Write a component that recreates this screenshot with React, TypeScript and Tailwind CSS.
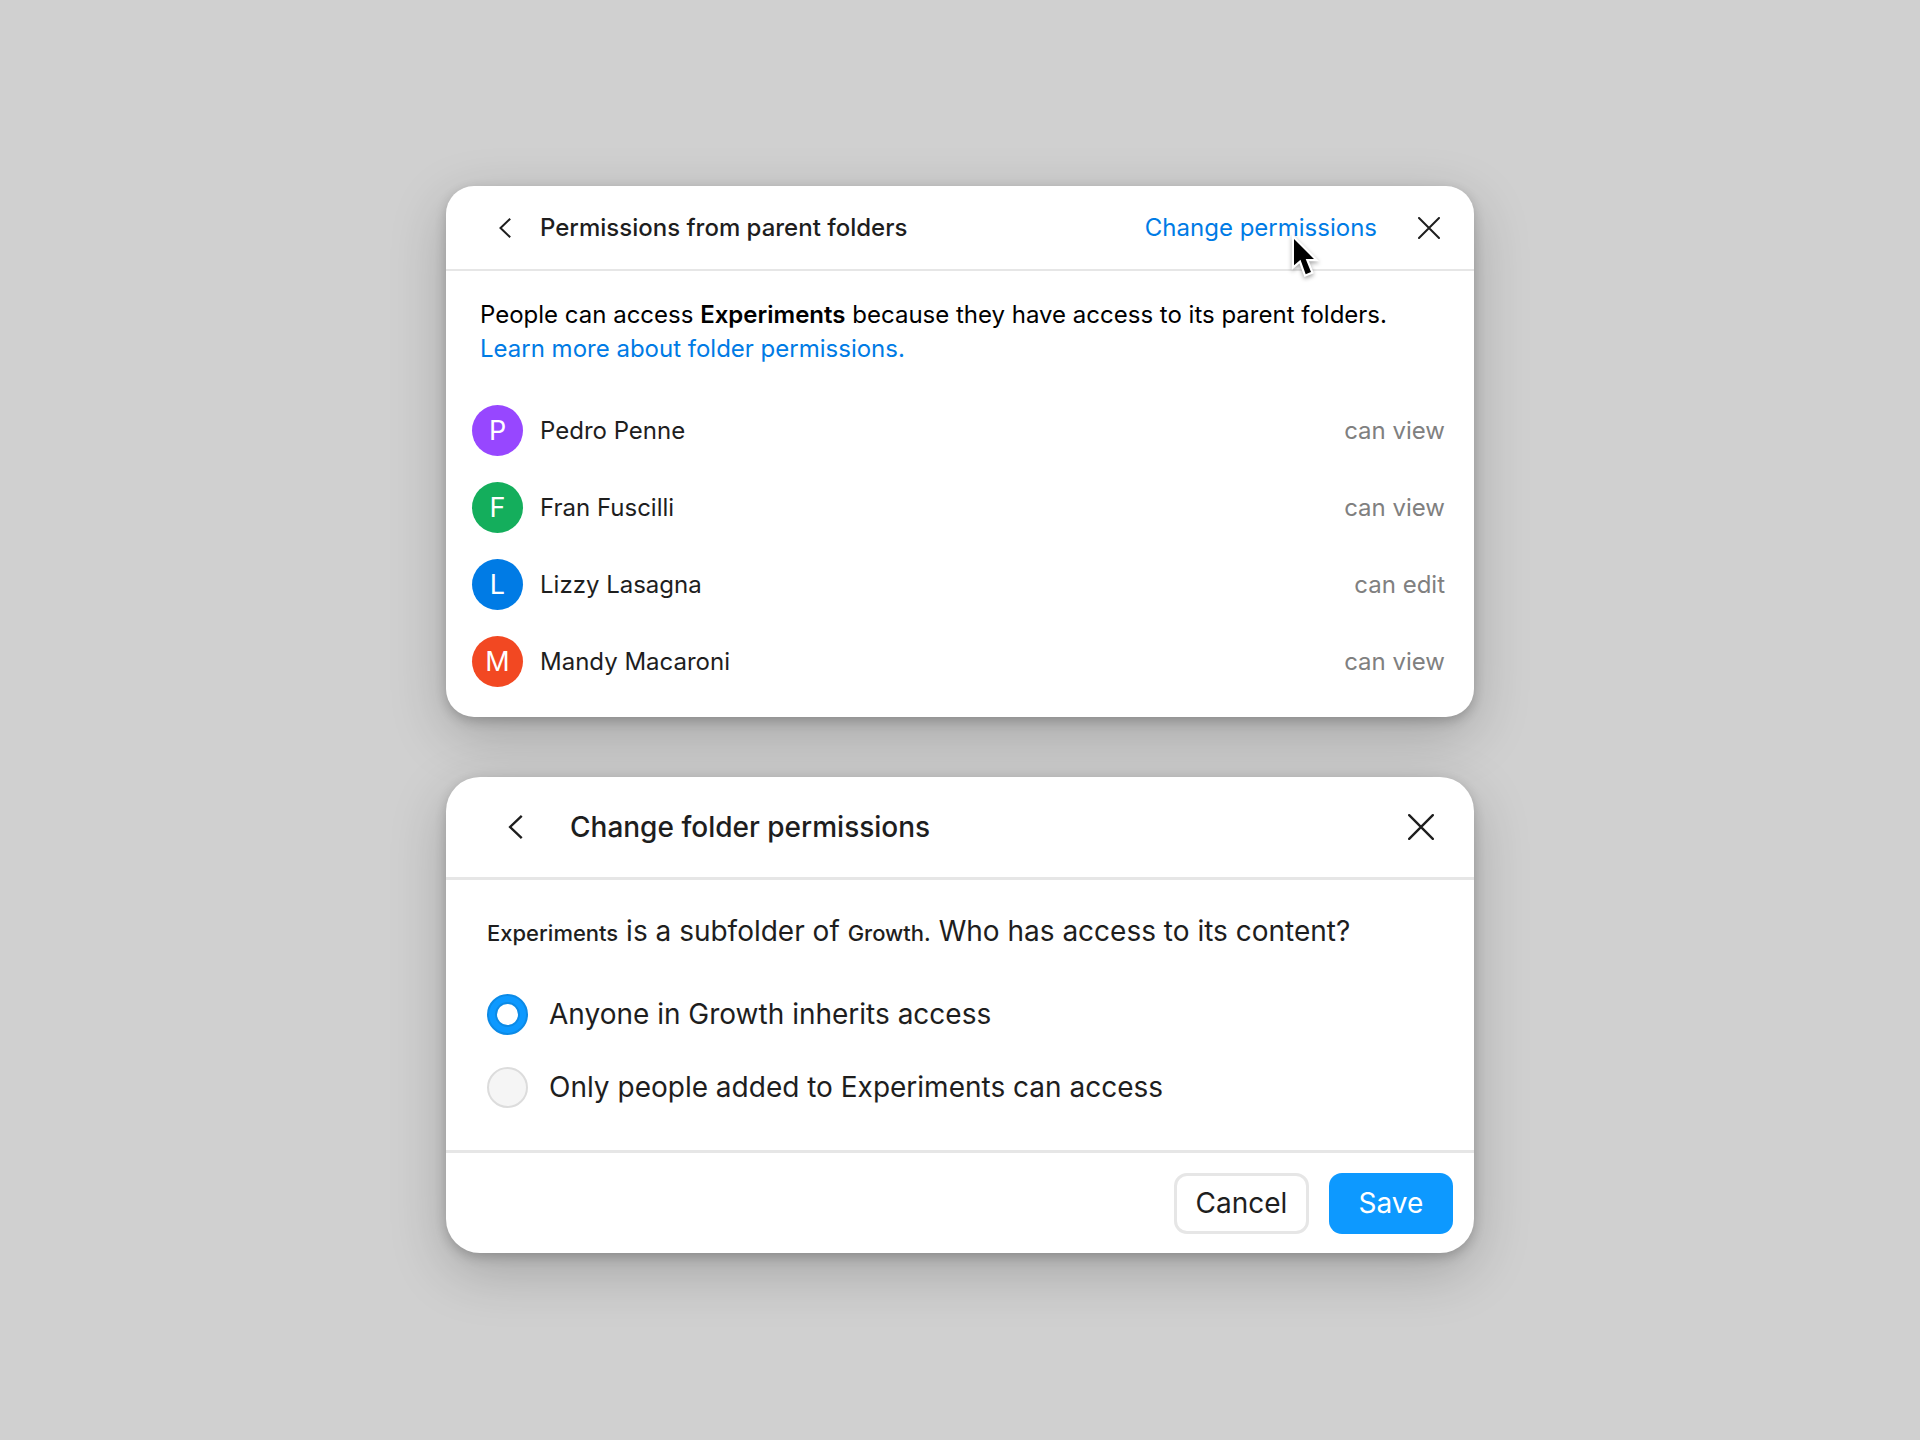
import React, { useState } from 'react';
import clsx from 'clsx';

interface Person {
  name: string;
  role: string;
  color: string;
}

const people: Person[] = [
  { name: 'Pedro Penne', role: 'can view', color: 'bg-[#9747ff]' },
  { name: 'Fran Fuscilli', role: 'can view', color: 'bg-[#14ae5c]' },
  { name: 'Lizzy Lasagna', role: 'can edit', color: 'bg-[#007be5]' },
  { name: 'Mandy Macaroni', role: 'can view', color: 'bg-[#f24822]' },
];

const cardShadow = 'shadow-[0_4px_12px_rgba(0,0,0,0.2),0_18px_56px_rgba(0,0,0,0.21)]';

const BackIcon: React.FC<{ className: string }> = ({ className }) => (
  <svg viewBox="0 0 12 20" className={className} fill="none" stroke="currentColor" strokeWidth="2" aria-hidden="true">
    <path d="M11.2 0.8 1.5 10l9.7 9.2" />
  </svg>
);

const CloseIcon: React.FC<{ className: string }> = ({ className }) => (
  <svg
    viewBox="0 0 22 22"
    className={className}
    fill="none"
    stroke="currentColor"
    strokeWidth="2"
    strokeLinecap="round"
    aria-hidden="true"
  >
    <path d="M1 1l20 20M21 1 1 21" />
  </svg>
);

const Cursor: React.FC = () => (
  <svg
    viewBox="0 0 34 48"
    className="pointer-events-none absolute top-[22px] right-[53px] h-[48px] w-[34px] drop-shadow-[0_2px_2px_rgba(0,0,0,0.35)]"
    aria-hidden="true"
  >
    <path
      d="M4 6v26.3l6.5-5.6 5.2 14.5 5.3-2.2-5.3-13h8.3z"
      fill="#000"
      stroke="#fff"
      strokeWidth="4.4"
      paintOrder="stroke"
    />
  </svg>
);

const PersonRow: React.FC<Person> = ({ name, role, color }) => (
  <li className="flex items-center">
    <span className={clsx(color, 'flex size-[51px] items-center justify-center rounded-full text-[27px] text-white')}>
      {name[0]}
    </span>
    <span className="ml-[17px] flex-1 text-[#1e1e1e]">{name}</span>
    <span className="text-[#808080]">{role}</span>
  </li>
);

const ParentPermissions: React.FC = () => (
  <section className={clsx(cardShadow, 'w-full rounded-[28px] bg-white text-[24px] leading-[34px]')}>
    <header className="flex h-[85px] items-center border-b-2 border-[#e6e6e6] pr-[34px] pl-[53px] text-[#1e1e1e]">
      <button type="button" aria-label="Back">
        <BackIcon className="h-[20px] w-[12px]" />
      </button>
      <h2 className="ml-[29px] flex-1 font-medium">Permissions from parent folders</h2>
      <div className="relative">
        <a href="#" className="text-[#007be5]">
          Change permissions
        </a>
        <Cursor />
      </div>
      <button type="button" aria-label="Close" className="ml-[41px]">
        <CloseIcon className="size-[22px]" />
      </button>
    </header>
    <p className="px-[34px] pt-[27px] text-black">
      People can access <strong className="font-semibold">Experiments</strong> because they have access to its parent
      folders.
      <br />
      <a href="#" className="text-[#007be5]">
        Learn more about folder permissions.
      </a>
    </p>
    <ul className="flex flex-col gap-[26px] pt-[39px] pr-[29px] pb-[30px] pl-[26px]">
      {people.map((person) => (
        <PersonRow key={person.name} {...person} />
      ))}
    </ul>
  </section>
);

interface OptionProps {
  label: string;
  checked: boolean;
  onSelect: () => void;
}

const Option: React.FC<OptionProps> = ({ label, checked, onSelect }) => (
  <label className="flex items-center gap-[21px]">
    <input
      type="radio"
      name="access"
      checked={checked}
      onChange={onSelect}
      className="flex size-[41px] appearance-none items-center justify-center rounded-full border-2 border-[#dcdcdc] bg-[#f5f5f5] checked:border-[#0c8ae6] checked:bg-[#0d99ff] checked:before:size-[25px] checked:before:rounded-full checked:before:border-2 checked:before:border-[#0c8ae6] checked:before:bg-white checked:before:content-['']"
    />
    {label}
  </label>
);

const options = ['Anyone in Growth inherits access', 'Only people added to Experiments can access'];

const ChangePermissions: React.FC = () => {
  const [selected, setSelected] = useState(options[0]);

  return (
    <section className={clsx(cardShadow, 'w-full rounded-[34px] bg-white text-[28px] leading-[41px] text-[#1e1e1e]')}>
      <header className="flex h-[103px] items-center border-b-3 border-[#e6e6e6] pr-[40px] pl-[62px]">
        <button type="button" aria-label="Back">
          <BackIcon className="h-[24px] w-[15px]" />
        </button>
        <h2 className="ml-[47px] flex-1 font-medium">Change folder permissions</h2>
        <button type="button" aria-label="Close">
          <CloseIcon className="size-[26px]" />
        </button>
      </header>
      <form onSubmit={(e) => e.preventDefault()}>
        <fieldset className="px-[41px] pt-[31px] pb-[42px]">
          <legend className="contents">
            <strong className="text-[22px] font-medium">Experiments</strong> is a subfolder of{' '}
            <strong className="text-[22px] font-medium">Growth.</strong> Who has access to its content?
          </legend>
          <div className="flex flex-col gap-8 pt-[40px]">
            {options.map((option) => (
              <Option
                key={option}
                label={option}
                checked={selected === option}
                onSelect={() => setSelected(option)}
              />
            ))}
          </div>
        </fieldset>
        <footer className="flex justify-end gap-5 border-t-3 border-[#e6e6e6] px-[21px] pt-[20px] pb-[19px]">
          <button type="button" className="h-[61px] w-[135px] rounded-[13px] border-3 border-[#e6e6e6]">
            Cancel
          </button>
          <button type="submit" className="h-[61px] w-[124px] rounded-[13px] bg-[#0d99ff] text-white">
            Save
          </button>
        </footer>
      </form>
    </section>
  );
};

const App: React.FC = () => {
  return (
    <div className="min-h-screen bg-[#d0d0d0] px-4 py-[186px] font-['Inter',sans-serif]">
      <main className="mx-auto flex max-w-[1028px] flex-col gap-[60px]">
        <ParentPermissions />
        <ChangePermissions />
      </main>
    </div>
  );
};

export default App;
